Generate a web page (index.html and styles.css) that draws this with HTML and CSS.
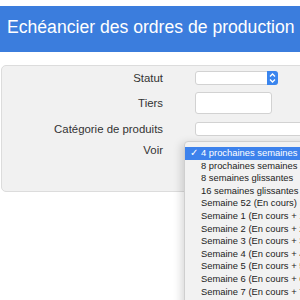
FILE: index.html
```html
<!DOCTYPE html>
<html>
<head>
    <title>Echéancier des ordres de production</title>
    <link rel="stylesheet" href="styles.css">
</head>
<body>
    <h1 class="title">Echéancier des ordres de production</h1>

    <form class="panel">
        <div class="row">
            <label>Statut</label>
            <div class="select">
                <span class="arrows">
                    <svg width="11" height="14" viewBox="0 0 11 14">
                        <path d="M3 5.5 L5.5 3 L8 5.5 M3 8.5 L5.5 11 L8 8.5" fill="none" stroke="#fff" stroke-width="1.3"/>
                    </svg>
                </span>
            </div>
        </div>
        <div class="row">
            <label>Tiers</label>
            <div class="input tiers"></div>
        </div>
        <div class="row">
            <label>Catégorie de produits</label>
            <div class="input wide"></div>
        </div>
        <div class="row">
            <label>Voir</label>
            <div class="placeholder"></div>
        </div>
    </form>

    <ul class="menu">
        <li class="selected"><span class="check">✓</span>4 prochaines semaines</li>
        <li>8 prochaines semaines</li>
        <li>8 semaines glissantes</li>
        <li>16 semaines glissantes</li>
        <li>Semaine 52 (En cours)</li>
        <li>Semaine 1 (En cours + 1)</li>
        <li>Semaine 2 (En cours + 2)</li>
        <li>Semaine 3 (En cours + 3)</li>
        <li>Semaine 4 (En cours + 4)</li>
        <li>Semaine 5 (En cours + 5)</li>
        <li>Semaine 6 (En cours + 6)</li>
        <li>Semaine 7 (En cours + 7)</li>
        <li>Semaine 8 (En cours + 8)</li>
    </ul>
</body>
</html>
```

FILE: styles.css
```css
body { margin: 0; font-family: "Liberation Sans", Arial, sans-serif; background: #fff; overflow: hidden; width: 300px; height: 300px; }

.title { margin: 6px 0 0; height: 46px; box-sizing: border-box; padding: 0 0 4px 7px; line-height: 42px; font-size: 17.6px; font-weight: normal; color: #fff; background: #3b7ddd; white-space: nowrap; }

.panel { margin: 13px 0 0 1px; width: 340px; height: 127px; box-sizing: border-box; padding: 5px 0 0; background: #f1f1f1; border: 1px solid #dcdcdc; border-radius: 5px; }
.row { display: grid; grid-template-columns: 161px auto; column-gap: 32px; align-items: center; margin-bottom: 7px; }
.row:nth-child(2) { margin-bottom: 8px; }
.row label { text-align: right; font-size: 11.4px; color: #333; }

.select { position: relative; width: 83px; height: 14px; box-sizing: border-box; background: #fff; border: 1px solid #d2d2d2; border-radius: 3px; }
.arrows { position: absolute; right: -1px; top: -1px; width: 11px; height: 14px; background: #3a85ee; border-radius: 0 3px 3px 0; display: flex; }
.input { height: 22px; box-sizing: border-box; background: #fff; border: 1px solid #d2d2d2; border-radius: 3px; }
.tiers { width: 77px; }
.wide { width: 140px; height: 14px; }
.placeholder { height: 14px; }

.menu { position: absolute; left: 184px; top: 141px; width: 140px; margin: 0; padding: 5px 0 0; list-style: none; background: #f2f2f2; border: 1px solid #cfcfcf; border-radius: 4px; box-shadow: -3px 2px 8px rgba(0, 0, 0, 0.15); font-size: 9.4px; color: #222; }
.menu li { position: relative; height: 12.6px; line-height: 12.6px; padding-left: 16px; white-space: nowrap; }
.menu li.selected { background: #3d82ec; color: #fff; }
.check { position: absolute; left: 5px; top: 0; font-size: 10px; }
```
